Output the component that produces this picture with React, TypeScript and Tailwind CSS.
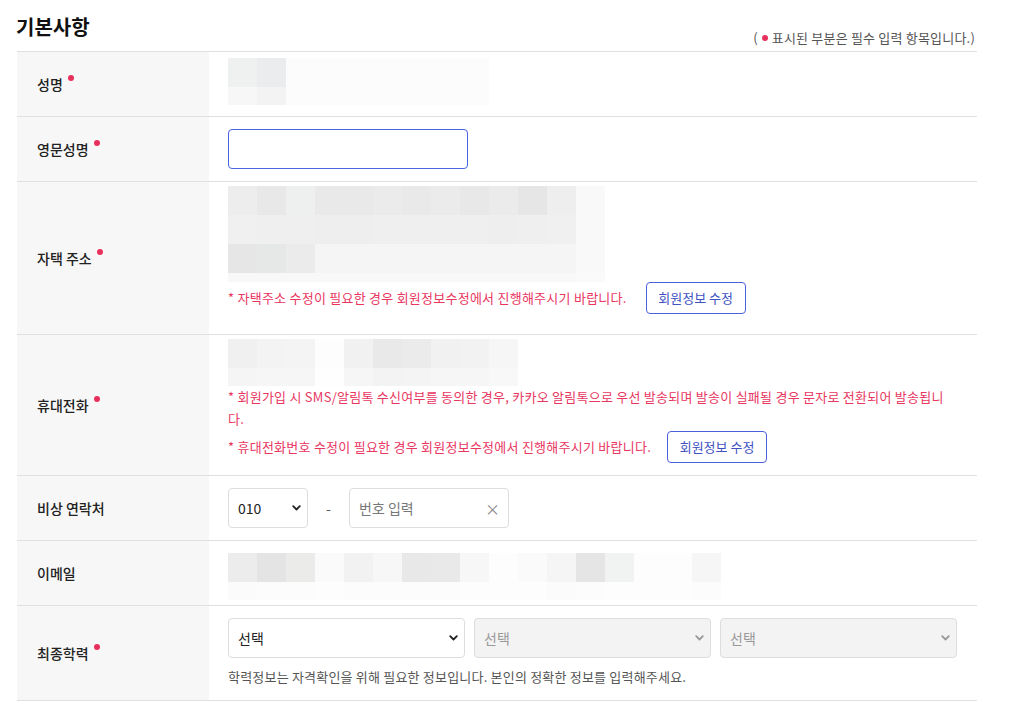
import type { ReactNode } from 'react';

type MosaicRow = { h: number; cells: string[] };

// blurred placeholder for personal data
function Mosaic({ rows }: { rows: MosaicRow[] }) {
  return (
    <div className="flex flex-col">
      {rows.map((row, i) => (
        <div key={i} className="flex">
          {row.cells.map((c, j) => (
            <div key={j} className="w-[29px] shrink-0" style={{ height: row.h, backgroundColor: c }} />
          ))}
        </div>
      ))}
    </div>
  );
}

function Dot() {
  return <span className="ml-[5px] inline-block h-[6px] w-[6px] -translate-y-[6px] rounded-full bg-[#e8305c]" />;
}

function Row({ label, required, children, contentClass }: { label: string; required?: boolean; children: ReactNode; contentClass: string }) {
  return (
    <div className="flex border-b border-[#e0e0e0]">
      <div className="flex w-[192px] shrink-0 items-center bg-[#f7f7f7] pl-[20px] text-[14px] font-medium text-[#222]">
        <span>{label}</span>
        {required && <Dot />}
      </div>
      <div className={`min-w-0 flex-1 pl-[19px] pr-[20px] ${contentClass}`}>{children}</div>
    </div>
  );
}

function Chevron({ color }: { color: string }) {
  return (
    <svg width="9" height="6" viewBox="0 0 9 6" className="pointer-events-none absolute right-[7px] top-1/2 -translate-y-1/2">
      <path d="M1.2 1.2 L4.5 4.5 L7.8 1.2" fill="none" stroke={color} strokeWidth="1.8" strokeLinecap="round" strokeLinejoin="round" />
    </svg>
  );
}

function EditButton() {
  return (
    <button className="h-[32px] w-[100px] shrink-0 rounded-[4px] border border-[#4a60dc] bg-white text-[13px] text-[#4052c2]">
      회원정보 수정
    </button>
  );
}

const W = '#fcfcfc';

export default function App() {
  return (
    <div className="min-h-[712px] bg-white font-['Noto_Sans_CJK_KR','Noto_Sans',sans-serif] text-[#222]">
      <div className="ml-[17px] w-[960px]">
        <div className="flex h-[51px] items-end justify-between pb-[3px] pr-[2px]">
          <h2 className="mb-auto ml-[-1px] mt-[12px] text-[20px] font-bold leading-[30px] text-[#111]">기본사항</h2>
          <p className="flex items-center text-[13px] leading-[20px] tracking-[0.2px] text-[#555]">
            (<span className="mx-[4px] inline-block h-[6px] w-[6px] rounded-full bg-[#e8305c]" />표시된 부분은 필수 입력 항목입니다.)
          </p>
        </div>

        <div className="border-t border-[#e0e0e0]">
          <Row label="성명" required contentClass="pt-[6px] pb-[11px]">
            <Mosaic
              rows={[
                { h: 29, cells: ['#eff0f0', '#ebecee', W, W, W, W, W, W, W] },
                { h: 18, cells: ['#f7f7f7', '#f3f3f3', W, W, W, W, W, W, W] },
              ]}
            />
          </Row>

          <Row label="영문성명" required contentClass="py-[12px]">
            <input className="block h-[40px] w-[240px] rounded-[4px] border border-[#4a63e0] px-3 text-[14px] outline-none" />
          </Row>

          <Row label="자택 주소" required contentClass="pt-[4px] pb-[20px]">
            <Mosaic
              rows={[
                { h: 29, cells: ['#ededed', '#e8e8e8', '#eef0ef', '#e9e9e9', '#e9e9e9', '#ebebeb', '#e9e9e9', '#ebebeb', '#e8e8e8', '#ebebeb', '#e6e6e6', '#eeeeee', '#f9f9f9'] },
                { h: 29, cells: ['#f0f0f0', '#efefef', '#efefef', '#eeeeee', '#eeeeee', '#efefef', '#efefef', '#efefef', '#efefef', '#eeeeee', '#efefef', '#f0f0f0', '#f9f9f9'] },
                { h: 29, cells: ['#e6e6e6', '#e6e7e7', '#ebebeb', '#f5f5f5', '#f5f5f5', '#f5f5f5', '#f5f5f5', '#f5f5f5', '#f5f5f5', '#f5f5f5', '#f5f5f5', '#f5f5f5', '#f9f9f9'] },
                { h: 9, cells: ['#f8f8f8', '#f8f8f8', '#f8f8f8', '#f8f8f8', '#f8f8f8', '#f8f8f8', '#f8f8f8', '#f8f8f8', '#f8f8f8', '#f8f8f8', '#f8f8f8', '#f8f8f8', '#fafafa'] },
              ]}
            />
            <div className="flex h-[32px] items-center">
              <p className="text-[13px] tracking-[0.25px] text-[#e8365f]">* 자택주소 수정이 필요한 경우 회원정보수정에서 진행해주시기 바랍니다.</p>
              <div className="ml-[19px]">
                <EditButton />
              </div>
            </div>
          </Row>

          <Row label="휴대전화" required contentClass="pt-[4px] pb-[13px]">
            <Mosaic
              rows={[
                { h: 29, cells: ['#f0f0f0', '#f3f3f3', '#f4f4f4', '#fdfdfd', '#f1f1f1', '#e9e9e9', '#ebebeb', '#f1f1f1', '#f2f2f2', '#f6f6f6'] },
                { h: 18, cells: ['#f5f5f5', '#f6f6f6', '#f6f6f6', '#fefefe', '#f6f6f6', '#f3f3f3', '#f4f4f4', '#f6f6f6', '#f6f6f6', '#f8f8f8'] },
              ]}
            />
            <p className="max-w-[722px] text-[13px] leading-[22px] tracking-[0.25px] text-[#e8365f]">
              * 회원가입 시 SMS/알림톡 수신여부를 동의한 경우, 카카오 알림톡으로 우선 발송되며 발송이 실패될 경우 문자로 전환되어 발송됩니다.
            </p>
            <div className="mt-[1px] flex h-[31px] items-center">
              <p className="text-[13px] tracking-[0.25px] text-[#e8365f]">* 휴대전화번호 수정이 필요한 경우 회원정보수정에서 진행해주시기 바랍니다.</p>
              <div className="ml-[16px]">
                <EditButton />
              </div>
            </div>
          </Row>

          <Row label="비상 연락처" contentClass="py-[12px]">
            <div className="flex items-center">
              <div className="relative w-[80px]">
                <select className="block h-[40px] w-full appearance-none rounded-[4px] border border-[#dddddd] bg-white pl-[9px] text-[14px] font-normal text-[#222] outline-none">
                  <option>010</option>
                </select>
                <Chevron color="#222" />
              </div>
              <span className="w-[41px] text-center text-[14px] text-[#555]">-</span>
              <div className="relative w-[160px]">
                <input
                  placeholder="번호 입력"
                  className="block h-[40px] w-full rounded-[4px] border border-[#dddddd] pl-[9px] pr-8 text-[14px] outline-none placeholder:text-[#777]"
                />
                <span className="absolute right-[9px] top-1/2 -translate-y-1/2 text-[15px] leading-none text-[#888]">×</span>
              </div>
            </div>
          </Row>

          <Row label="이메일" contentClass="pt-[12px] pb-[5px]">
            <Mosaic
              rows={[
                { h: 29, cells: ['#ececec', '#e4e4e4', '#ebebea', '#fafafa', '#f2f2f2', '#f7f7f7', '#e7e8e7', '#e9e9e9', '#f7f7f7', '#fdfdfd', '#fafafa', '#f5f5f5', '#e4e5e4', '#f1f3f2', '#fdfdfd', '#fdfdfd', '#f6f6f6'] },
                { h: 18, cells: ['#fbfbfb', '#fcfcfc', '#fcfcfc', '#fdfdfd', '#fcfcfc', '#fcfcfc', '#fcfcfc', '#fcfcfc', '#fdfdfd', '#fdfdfd', '#fdfdfd', '#fbfbfb', '#fcfcfc', '#fdfdfd', '#fdfdfd', '#fdfdfd', '#fcfcfc'] },
              ]}
            />
          </Row>

          <Row label="최종학력" required contentClass="pt-[12px] pb-[12px]">
            <div className="flex gap-[9px]">
              <div className="relative w-[237px]">
                <select className="block h-[40px] w-full appearance-none rounded-[4px] border border-[#dddddd] bg-white pl-[9px] text-[14px] font-normal text-[#222] outline-none">
                  <option>선택</option>
                </select>
                <Chevron color="#222" />
              </div>
              <div className="relative w-[237px]">
                <select disabled className="block h-[40px] w-full appearance-none rounded-[4px] border border-[#dddddd] bg-[#f3f3f3] pl-[9px] text-[14px] text-[#999] outline-none">
                  <option>선택</option>
                </select>
                <Chevron color="#999" />
              </div>
              <div className="relative w-[237px]">
                <select disabled className="block h-[40px] w-full appearance-none rounded-[4px] border border-[#dddddd] bg-[#f3f3f3] pl-[9px] text-[14px] text-[#999] outline-none">
                  <option>선택</option>
                </select>
                <Chevron color="#999" />
              </div>
            </div>
            <p className="mt-[8px] text-[13px] leading-[22px] tracking-[0.2px] text-[#555]">
              학력정보는 자격확인을 위해 필요한 정보입니다. 본인의 정확한 정보를 입력해주세요.
            </p>
          </Row>
        </div>
      </div>
    </div>
  );
}
